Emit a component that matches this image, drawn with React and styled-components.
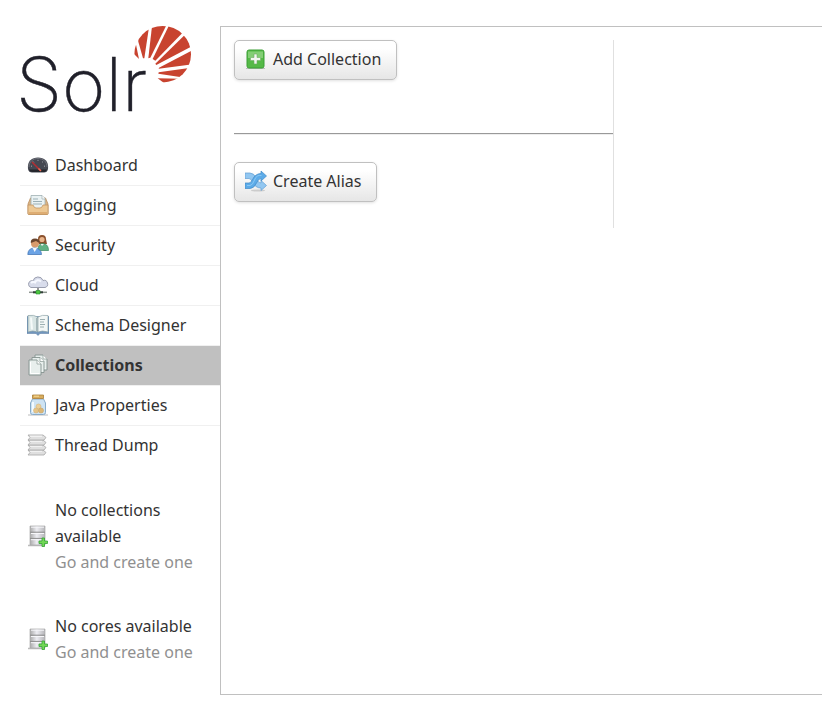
import React from "react";
import styled, { createGlobalStyle, css } from "styled-components";

const GlobalStyle = createGlobalStyle`
  *, *::before, *::after { box-sizing: border-box; }
  body {
    margin: 0;
    background: #fff;
    color: #333;
    font-family: "Lucida Grande", "Noto Sans", "DejaVu Sans", sans-serif;
    font-size: 16px;
    line-height: 26px;
  }
`;

const Page = styled.div`
  display: grid;
  grid-template-columns: 200px minmax(0, 1fr);
  min-height: calc(100vh - 25px);
  padding: 26px 0 0 20px;
`;

const Sidebar = styled.aside`
  display: flex;
  flex-direction: column;
`;

const LogoLink = styled.a`
  display: block;
  height: 120px;
`;

const Logo = styled.svg`
  display: block;
  overflow: visible;
  text {
    font-family: Inter, "Open Sans", sans-serif;
    font-size: 74px;
    font-weight: 200;
    line-height: 1;
  }
`;

const Menu = styled.ul`
  list-style: none;
  margin: 0;
  padding: 0;
`;

const MenuItem = styled.li`
  border-bottom: 1px solid #f0f0f0;
  &:last-child { border-bottom: 0; }
`;

const MenuLink = styled.a`
  display: flex;
  align-items: center;
  gap: 6px;
  height: 39px;
  padding: 0 0 2px 7px;
  color: #333;
  text-decoration: none;
  ${(p) => p.$active && css`
    background: #c0c0c0;
    font-weight: bold;
  `}
`;

const Notices = styled.div`
  display: flex;
  flex-direction: column;
  gap: 38px;
  margin-top: 32px;
`;

const Notice = styled.a`
  display: flex;
  align-items: center;
  gap: 6px;
  padding: 0 16px 0 7px;
  color: #333;
  text-decoration: none;
`;

const NoticeText = styled.span`
  flex: 1;
`;

const Hint = styled.span`
  display: block;
  color: #909090;
  white-space: nowrap;
`;

const Glyph = styled.svg`
  flex: none;
  width: 22px;
  height: 22px;
`;

const Content = styled.main`
  border: 1px solid #c0c0c0;
  border-right: 0;
  padding: 13px;
`;

const Actions = styled.section`
  width: 66%;
  height: 188px;
  border-right: 1px solid #e0e0e0;
`;

const ActionButton = styled.button`
  display: flex;
  align-items: center;
  gap: 6px;
  height: 40px;
  padding: 0 15px 2px 10px;
  border: 1px solid #c0c0c0;
  border-radius: 5px;
  background: linear-gradient(#fff 20%, #e6e6e6);
  box-shadow: 0 1px 3px rgba(0, 0, 0, 0.12);
  color: #333;
  font: inherit;
  cursor: pointer;
`;

const Divider = styled.hr`
  height: 2px;
  margin: 53px 0 27px;
  border: 0;
  border-top: 1px solid #999;
  border-bottom: 1px solid #eee;
`;

function SolrLogo() {
  return (
    <Logo width="176" height="110" viewBox="0 0 176 110" role="img" aria-label="Solr">
      <defs>
        <clipPath id="sun"><circle cx="142.7" cy="28.2" r="28.3" /></clipPath>
      </defs>
      <text x="-4" y="85" fill="#20202a" stroke="#20202a" strokeWidth=".4">Solr</text>
      <g clipPath="url(#sun)">
        <g transform="translate(-10 -11) scale(.33333)" fill="#c8432f">
          <path d="M372 60 387 132 367 112Z" />
          <path d="M385 56 418 30 403 130 399 130 385 80Z" />
          <path d="M427 25 472 25 421 128 415 130Z" />
          <path d="M480 25 523 48 436 137 428 132Z" />
          <path d="M528 56 555 89 439 150 436 146Z" />
          <path d="M555 102 550 148 446 161 447 158Z" />
          <path d="M550 157 515 187 445 176 446 172Z" />
          <path d="M510 191 485 208 462 204 443 190Z" />
        </g>
      </g>
    </Logo>
  );
}

function Icon({ name }) {
  return (
    <Glyph viewBox="0 0 22 22" aria-hidden="true">
      {drawings[name]}
    </Glyph>
  );
}

const server = (
  <>
    <defs>
      <linearGradient id="steel"><stop stopColor="#aaa" /><stop offset=".45" stopColor="#ededf2" /><stop offset="1" stopColor="#b5b5b9" /></linearGradient>
    </defs>
    <path d="M1 20.500h17" stroke="#bbb" strokeWidth="1.500" />
    <path d="M3 1h15v19H3z" fill="url(#steel)" stroke="#aaa" strokeWidth=".7" />
    <path d="M3 7.200h15M3 13.400h15" stroke="#8c8c8c" />
    <path d="M4 2.200h13M4 8.500h13M4 14.700h13" stroke="#f7f7fa" />
    <path d="M15 13h2.500v3h3v2.500h-3v3H15v-3h-3V16h3z" fill="#72d755" stroke="#35a535" strokeWidth=".8" />
  </>
);

const drawings = {
  dashboard: (
    <>
      <path d="M1 15C0 7 5 3.500 11 3.500S22 7 21 15c-.4 2.500-2 3.500-4 3.500H5c-2 0-3.600-1-4-3.500Z" fill="#454852" />
      <path d="M2 13c0-5.500 4-8.500 9-8.500s9 3 9 8.500" fill="none" stroke="#6f727b" />
      <path d="M2 15.500h18c-1 2-2 2.500-4 2.500H6c-2 0-3.500-.8-4-2.500Z" fill="#25262c" />
      <path d="m4 12 1 .3M6 7.500l.8.8M11 5.800v1M16 7.500l-.8.8M18 12l-1 .3" stroke="#a6a9af" />
      <path d="m5 8 8.500 8.500" stroke="#b62d32" strokeWidth="1.500" />
      <path d="m11.500 14.500 2.500 2.500" stroke="#ea6c55" strokeWidth="1.500" />
    </>
  ),
  logging: (
    <>
      <path d="m1 10 2.500-6h15l2.500 6v9.500q0 1-1 1H2q-1 0-1-1Z" fill="#d8b487" stroke="#ba8c5a" strokeWidth=".8" />
      <path d="M4 1.500h11l3 3V15H4Z" fill="#eaf2f3" stroke="#9fb0b3" strokeWidth=".8" />
      <path d="M15 1.500V5h3" fill="#fff" stroke="#9fb0b3" strokeWidth=".7" />
      <path d="M6 5h5M6 7.500h9M6 10h9" stroke="#9bb0b6" />
      <path d="M1 11h5q1 3 3 3h4q2 0 3-3h5v8.500q0 1-1 1H2q-1 0-1-1Z" fill="#edc893" stroke="#c39562" strokeWidth=".8" />
      <path d="M2 19h18" stroke="#d9a568" strokeWidth="1.500" />
    </>
  ),
  security: (
    <>
      <path d="M11 9V5q0-4 4-4t4 4l1 5h-8Z" fill="#8b512d" />
      <circle cx="15" cy="5.500" r="2.600" fill="#e9b58b" />
      <path d="M11 16q0-6 4-6.500 6 0 6.500 6v1H11Z" fill="#61b183" stroke="#368961" strokeWidth=".7" />
      <path d="m13.500 10 1.500 2 2-2" fill="#eee" />
      <circle cx="8" cy="9.500" r="4" fill="#d99b6c" />
      <path d="M3.800 9q-.5-4.500 4.200-4.500T12.300 9L9 7Z" fill="#69452e" />
      <path d="M.8 20.500Q1 14 7.500 14t7 6.500Z" fill="#6ba3e5" stroke="#4879b7" strokeWidth=".8" />
      <path d="m5.500 14 2.200 4 2.300-4Z" fill="#f4f7fb" />
    </>
  ),
  cloud: (
    <>
      <path d="M4 13.500A3.500 3.500 0 0 1 3.500 7q1.500-.6 2.500 0a5.200 5.200 0 0 1 10-.5 3.600 3.600 0 1 1 2 7Z" fill="#d8dceb" stroke="#9a9eaf" />
      <path d="M4 9q2-2 4-.5 2-4 6-1" fill="none" stroke="#f6f8ff" strokeWidth="2" />
      <path d="M11 14v4" stroke="#777" strokeWidth="1.500" />
      <path d="M2 18.300h18" stroke="#8e9690" strokeWidth="1.500" />
      <path d="M6 18.300h10" stroke="#33403a" strokeWidth="2" />
      <path d="M9 16.500h4v3.500H9z" fill="#4dc83f" stroke="#268d2b" strokeWidth=".6" />
    </>
  ),
  schema: (
    <>
      <path d="M0 2.500h22v17h-9l-2 2-2-2H0Z" fill="#7095bd" stroke="#56799f" strokeWidth=".5" />
      <path d="M1 1.500q6-1 9.500 1.500v15Q6 16 1 18Z" fill="#d9e5e4" stroke="#8ea4a7" strokeWidth=".7" />
      <path d="M21 1.500q-6-1-10 1.500v15q4-2 10 0Z" fill="#f3f7f6" stroke="#8ea4a7" strokeWidth=".7" />
      <path d="M10 4v13" stroke="#a5b6b8" strokeWidth="2" />
      <path d="M13 5.500h5M13 8h4M13 10.500h5M13 13h4" stroke="#9cafb1" />
      <path d="m4 3.500 1 12" stroke="#f6faf9" strokeWidth="2" />
    </>
  ),
  collections: (
    <>
      {[[7, 0], [4, 2.5], [1, 5]].map(([x, y]) => (
        <g key={x} transform={`translate(${x} ${y})`}>
          <path d="M1 1h8l4 4v11H1Z" fill="#e8efed" stroke="#84928e" strokeWidth=".9" />
          <path d="M9 1v4h4" fill="#fff" stroke="#94a39f" strokeWidth=".8" />
          <path d="M2.500 3v11.500h9" fill="none" stroke="#fff" />
        </g>
      ))}
    </>
  ),
  java: (
    <>
      <path d="M1 21h20" stroke="#bbb" />
      <path d="M5.500 5h11l2 4v9.500q0 2-2 2h-11q-2 0-2-2V9Z" fill="#cee3f3" stroke="#88abc9" />
      <path d="M5.500 1h11v3.500h-11z" fill="#d9ad5c" stroke="#a87d38" strokeWidth=".8" />
      <path d="M7 2.200h5" stroke="#f7db9a" />
      <path d="M6 8v10" stroke="#f2faff" strokeWidth="2" />
      <circle cx="11.500" cy="12.500" r="2.500" fill="#ebcf98" stroke="#d4b47c" strokeWidth=".6" />
      <circle cx="9" cy="16.500" r="2.500" fill="#e5c487" stroke="#d4b47c" strokeWidth=".6" />
      <circle cx="14" cy="16.500" r="2.500" fill="#dcb877" stroke="#c9a566" strokeWidth=".6" />
    </>
  ),
  threads: (
    <>
      {[16, 11, 6, 1].map((y) => (
        <g key={y}>
          <path d={`M1 ${y}H16L19 ${y + 2.5}L17 ${y + 5}H1L3 ${y + 2.5}Z`} fill="#dfdfdf" stroke="#a6a6a6" strokeWidth=".8" />
          <path d={`M3 ${y + 1.2}h12`} stroke="#fafafa" />
        </g>
      ))}
    </>
  ),
  server,
  add: (
    <>
      <path d="M1 20.500h19" stroke="#bbb" />
      <rect x="2" y="2" width="17" height="18" rx="2" fill="#55b947" stroke="#3b9f34" />
      <path d="M3 3.500h15V10H3z" fill="#83ce75" />
      <path d="M9 6h3v3.500h3.500v3H12V16H9v-3.500H5.500v-3H9Z" fill="#f3f6f1" stroke="#70ad66" strokeWidth=".6" />
    </>
  ),
  shuffle: (
    <>
      <ellipse cx="13" cy="20.500" rx="7" ry="1" fill="#ccc" />
      <path d="M0 3h5q4 0 6.500 5.500Q13 13 16 13v-2.500l5.500 5L16 20.500V18q-5.500 0-8.500-6Q6 8.500 4 8.500H0Z" fill="#92c7f1" stroke="#619ed3" strokeWidth=".7" />
      <path d="M0 18.500h5q4 0 6.500-5.500 2-4.500 4.500-4.500V11l5.500-5L16 1v2.500q-5.500 0-8.500 6-1.500 3.500-3.500 3.500H0Z" fill="#5cabe8" stroke="#4389c6" strokeWidth=".7" />
      <path d="M2 15.500h3q2.500 0 4.500-5.500t7-4.500" fill="none" stroke="#8ac8f5" />
    </>
  ),
};

const links = [
  ["dashboard", "Dashboard"],
  ["logging", "Logging"],
  ["security", "Security"],
  ["cloud", "Cloud"],
  ["schema", "Schema Designer"],
  ["collections", "Collections"],
  ["java", "Java Properties"],
  ["threads", "Thread Dump"],
];

const notices = ["No collections available", "No cores available"];

export default function App() {
  return (
    <>
      <GlobalStyle />
      <Page>
        <Sidebar>
          <LogoLink href="#/"><SolrLogo /></LogoLink>
          <nav aria-label="Main">
            <Menu>
              {links.map(([id, label]) => (
                <MenuItem key={id}>
                  <MenuLink
                    href={`#/${id}`}
                    $active={id === "collections"}
                    aria-current={id === "collections" ? "page" : undefined}
                  >
                    <Icon name={id} />
                    {label}
                  </MenuLink>
                </MenuItem>
              ))}
            </Menu>
          </nav>
          <Notices>
            {notices.map((text) => (
              <Notice key={text} href="#/collections">
                <Icon name="server" />
                <NoticeText>
                  {text}
                  <Hint>Go and create one</Hint>
                </NoticeText>
              </Notice>
            ))}
          </Notices>
        </Sidebar>
        <Content>
          <Actions>
            <ActionButton type="button"><Icon name="add" />Add Collection</ActionButton>
            <Divider />
            <ActionButton type="button"><Icon name="shuffle" />Create Alias</ActionButton>
          </Actions>
        </Content>
      </Page>
    </>
  );
}
